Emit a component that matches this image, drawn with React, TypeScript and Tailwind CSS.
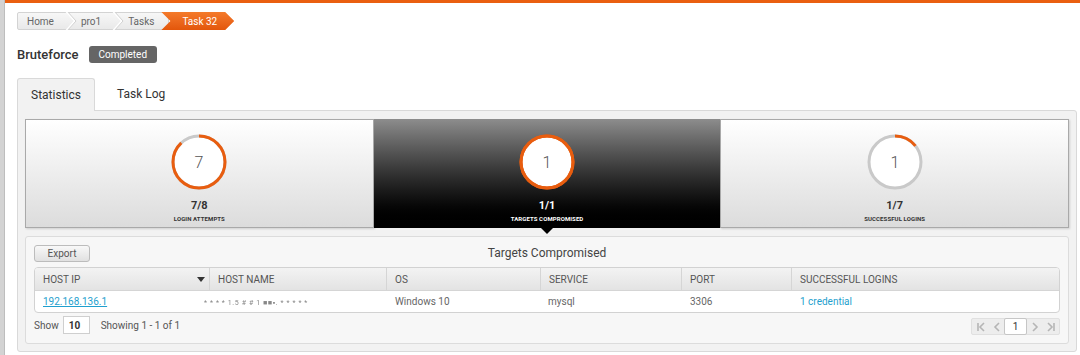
import React from "react";

function Chev() {
  return (
    <svg width="12" height="18" viewBox="0 0 12 18" className="shrink-0">
      <polyline points="1,-1 10,9 1,19" fill="none" stroke="#ffffff" strokeWidth="2" />
      <polyline points="2,-1 11,9 2,19" fill="none" stroke="#cfcfcf" strokeWidth="1" />
    </svg>
  );
}

function Ring({ frac, value, dark }: { frac: number; value: string; dark?: boolean }) {
  const r = 26;
  const c = 2 * Math.PI * r;
  return (
    <svg width="58" height="58" viewBox="0 0 58 58">
      <circle cx="29" cy="29" r={r} fill="#fff" stroke={dark ? "#e85d0f" : "#c9c9c9"} strokeWidth="3" />
      {frac > 0 && (
        <circle
          cx="29"
          cy="29"
          r={r}
          fill="none"
          stroke="#e85d0f"
          strokeWidth="3"
          strokeDasharray={`${c * frac} ${c}`}
          transform="rotate(-90 29 29)"
        />
      )}
      <text x="29" y="35" textAnchor="middle" fontSize="16" fontFamily="Roboto, sans-serif" fontWeight="300" fill="#555">
        {value}
      </text>
    </svg>
  );
}

function StatBox({
  frac,
  value,
  big,
  label,
  dark,
}: {
  frac: number;
  value: string;
  big: string;
  label: string;
  dark?: boolean;
}) {
  return (
    <div
      className={
        dark
          ? "flex-1 flex flex-col items-center bg-gradient-to-b from-[#8d8d8d] to-[#000000] pt-[14px]"
          : "flex-1 flex flex-col items-center bg-gradient-to-b from-[#ffffff] to-[#dcdcdc] border border-[#a9a9a9] pt-[13px] shadow-[1px_1px_2px_rgba(0,0,0,0.15)]"
      }
    >
      <Ring frac={frac} value={value} dark={dark} />
      <div className={(dark ? "text-white" : "text-[#333]") + " text-[11px] font-bold leading-[12px] mt-[9px]"}>{big}</div>
      <div className={(dark ? "text-white" : "text-[#333]") + " text-[6px] font-bold leading-[8px] mt-[3px] tracking-[0.1px]"}>{label}</div>
    </div>
  );
}

function PagIcon({ kind }: { kind: "first" | "prev" | "next" | "last" }) {
  const stroke = "#b5b5b5";
  return (
    <svg width="10" height="10" viewBox="0 0 10 10">
      {kind === "first" && (
        <>
          <line x1="2" y1="1" x2="2" y2="9" stroke={stroke} strokeWidth="1.6" />
          <polyline points="8,1 4,5 8,9" fill="none" stroke={stroke} strokeWidth="1.6" />
        </>
      )}
      {kind === "prev" && <polyline points="7,1 3,5 7,9" fill="none" stroke={stroke} strokeWidth="1.6" />}
      {kind === "next" && <polyline points="3,1 7,5 3,9" fill="none" stroke={stroke} strokeWidth="1.6" />}
      {kind === "last" && (
        <>
          <polyline points="2,1 6,5 2,9" fill="none" stroke={stroke} strokeWidth="1.6" />
          <line x1="8" y1="1" x2="8" y2="9" stroke={stroke} strokeWidth="1.6" />
        </>
      )}
    </svg>
  );
}

export default function App() {
  const cols = [
    { name: "HOST IP", w: "w-[175px]" },
    { name: "HOST NAME", w: "w-[177px]" },
    { name: "OS", w: "w-[154px]" },
    { name: "SERVICE", w: "w-[141px]" },
    { name: "PORT", w: "w-[110px]" },
    { name: "SUCCESSFUL LOGINS", w: "flex-1" },
  ];
  return (
    <div className="flex w-[1080px] h-[355px] overflow-hidden bg-white font-['Roboto','Liberation_Sans',sans-serif]">
      <div className="w-[5px] shrink-0 bg-[#d3d3d3] border-r border-[#bdbdbd]" />
      <div className="flex-1 flex flex-col">
        <div className="h-[3px] bg-[#ea5f10]" />
        <div className="pl-[12px] pr-[2px] flex flex-col">
          {/* breadcrumb */}
          <div className="flex h-[18px] mt-[9px] text-[10px]">
            <div className="flex items-center h-full bg-gradient-to-b from-[#f7f7f7] to-[#e9e9e9] border border-[#d3d3d3] rounded-l-[2px] pl-[9px] text-[#666]">
              <span>Home</span>
              <span className="ml-[11px]"><Chev /></span>
              <span className="ml-[4px]">pro1</span>
              <span className="ml-[11px]"><Chev /></span>
              <span className="ml-[4px]">Tasks</span>
              <span className="ml-[4px] w-[10px]" />
            </div>
            <div className="-ml-[8px] h-full flex items-center bg-gradient-to-b from-[#f47a2a] to-[#e3560a] text-white pl-[21px] pr-[17px] [clip-path:polygon(0_0,calc(100%-9px)_0,100%_50%,calc(100%-9px)_100%,0_100%,9px_50%)]">
              Task 32
            </div>
          </div>
          {/* title */}
          <div className="flex items-center mt-[16px] h-[17px]">
            <span className="text-[13px] font-medium text-[#333]">Bruteforce</span>
            <span className="ml-[10px] h-[17px] px-[10px] rounded-[3px] bg-[#656565] text-white text-[10px] flex items-center">Completed</span>
          </div>
          {/* tabs */}
          <div className="flex mt-[14px] h-[33px] items-end">
            <div className="h-[33px] w-[78px] bg-[#f2f2f2] border border-b-0 border-[#d9d9d9] rounded-t-[3px] flex items-center justify-center text-[12px] text-[#333] relative z-10 -mb-px pb-px">
              Statistics
            </div>
            <div className="h-[33px] flex items-center ml-[22px] text-[12px] text-[#333]">Task Log</div>
          </div>
          {/* panel */}
          <div className="w-[1060px] h-[242px] bg-[#f2f2f2] border border-[#d9d9d9] rounded-b-[3px] rounded-tr-[3px] px-[7px] pt-[8px]">
            <div className="relative flex h-[109px]">
              <StatBox frac={7 / 8} value="7" big="7/8" label="LOGIN ATTEMPTS" />
              <StatBox frac={1} value="1" big="1/1" label="TARGETS COMPROMISED" dark />
              <StatBox frac={1 / 7} value="1" big="1/7" label="SUCCESSFUL LOGINS" />
              <div className="absolute left-[516px] -bottom-[6px] w-0 h-0 border-l-[6px] border-r-[6px] border-t-[6px] border-l-transparent border-r-transparent border-t-black" />
            </div>
            <div className="mt-[8px] h-[108px] bg-[#f7f7f7] border border-[#dcdcdc] rounded-[3px] px-[8px] pt-[7px]">
              <div className="grid grid-cols-[1fr_auto_1fr] items-center h-[17px]">
                <div>
                  <button className="h-[17px] w-[56px] rounded-[3px] border border-[#bcbcbc] bg-gradient-to-b from-[#f8f8f8] to-[#e1e1e1] text-[10px] text-[#555] flex items-center justify-center">
                    Export
                  </button>
                </div>
                <div className="text-[12px] text-[#444]">Targets Compromised</div>
                <div />
              </div>
              <div className="mt-[6px] border border-[#d2d2d2] rounded-[4px] overflow-hidden bg-white">
                <div className="flex h-[23px] bg-gradient-to-b from-[#f3f3f3] to-[#e3e3e3] border-b border-[#d5d5d5] text-[10px] text-[#555]">
                  {cols.map((c, i) => (
                    <div
                      key={c.name}
                      className={
                        c.w +
                        " flex items-center pl-[8px] " +
                        (i < cols.length - 1 ? "border-r border-[#d5d5d5] " : "") +
                        (i === 0 ? "justify-between pr-[4px]" : "")
                      }
                    >
                      <span>{c.name}</span>
                      {i === 0 && (
                        <svg width="8" height="5" viewBox="0 0 8 5">
                          <polygon points="0,0 8,0 4,5" fill="#333" />
                        </svg>
                      )}
                    </div>
                  ))}
                </div>
                <div className="flex h-[21px] items-center text-[10px] text-[#666]">
                  <div className="w-[175px] pl-[8px]">
                    <span className="text-[#1f9fce] underline">192.168.136.1</span>
                  </div>
                  <div className="w-[185px] -ml-[8px] pl-[2px]">
                    <span className="text-[7px] text-[#888] tracking-[0.6px] blur-[0.5px]">* * * * 1.5 # # 1 ■■▪. * * * * *</span>
                  </div>
                  <div className="w-[154px] pl-[8px]">Windows 10</div>
                  <div className="w-[141px] pl-[7px]">mysql</div>
                  <div className="w-[110px] pl-[8px]">3306</div>
                  <div className="flex-1 pl-[8px] text-[#1f9fce]">1 credential</div>
                </div>
              </div>
              <div className="flex items-center justify-between mt-[3px] h-[18px]">
                <div className="flex items-center text-[10px] text-[#555]">
                  <span>Show</span>
                  <span className="ml-[4px] w-[27px] h-[18px] border border-[#cfcfcf] bg-white font-bold text-[#333] text-[10px] flex items-center pl-[5px]">10</span>
                  <span className="ml-[11px]">Showing 1 - 1 of 1</span>
                </div>
                <div className="flex items-center h-[17px] bg-[#ededed] border border-[#e0e0e0] rounded-[2px] mt-[3px]">
                  <div className="w-[17px] flex justify-center"><PagIcon kind="first" /></div>
                  <div className="w-[15px] flex justify-center"><PagIcon kind="prev" /></div>
                  <div className="w-[23px] h-[17px] bg-white border border-[#c6c6c6] rounded-[2px] flex items-center justify-center text-[10px] text-[#333]">1</div>
                  <div className="w-[16px] flex justify-center"><PagIcon kind="next" /></div>
                  <div className="w-[16px] flex justify-center"><PagIcon kind="last" /></div>
                </div>
              </div>
            </div>
          </div>
        </div>
      </div>
    </div>
  );
}
